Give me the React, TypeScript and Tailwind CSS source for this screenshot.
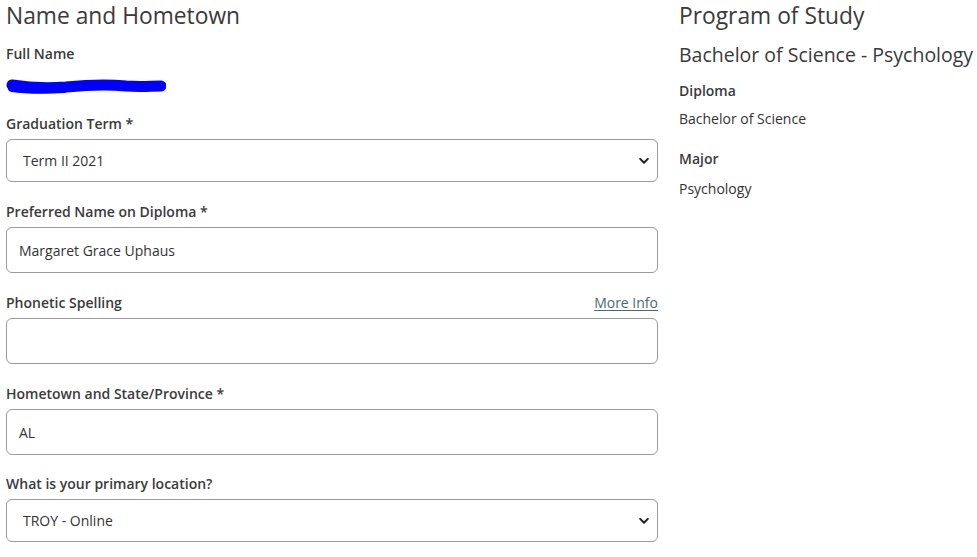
import React from "react";

const Chevron = () => (
  <svg width="10" height="7" viewBox="0 0 10 7" className="absolute right-[4px] top-1/2 -translate-y-1/2">
    <path d="M1.2 1.4 L5 5.2 L8.8 1.4" fill="none" stroke="#222" strokeWidth="2" strokeLinecap="round" strokeLinejoin="round" />
  </svg>
);

function Label({ children }: { children: React.ReactNode }) {
  return <div className="text-[14px] leading-[21px] font-semibold text-[#3a3a3a]">{children}</div>;
}

function SelectBox({ value }: { value: string }) {
  return (
    <div className="relative h-[43px] rounded-[6px] border border-[#9a9a9a] bg-white flex items-center pl-[16px]">
      <span className="text-[14px] text-[#333]">{value}</span>
      <div className="absolute right-[4px] top-0 bottom-0 w-[12px]">
        <Chevron />
      </div>
    </div>
  );
}

function TextBox({ value }: { value: string }) {
  return (
    <div className="h-[46px] rounded-[6px] border border-[#9a9a9a] bg-white flex items-center pl-[12px]">
      <span className="text-[14px] text-[#333]">{value}</span>
    </div>
  );
}

export default function App() {
  return (
    <div className="w-[977px] h-[557px] bg-white overflow-hidden flex" style={{ fontFamily: '"Open Sans", "Liberation Sans", sans-serif' }}>
      <div className="w-[652px] ml-[6px] shrink-0">
        <h2 className="text-[22.8px] leading-[30px] font-normal text-[#3a3a3a] mt-[1px]">Name and Hometown</h2>
        <div className="mt-[12px]">
          <Label>Full Name</Label>
        </div>
        <svg width="160" height="22" viewBox="0 0 160 22" className="block mt-[9px]">
          <path
            d="M6 12 C 25 15, 45 15, 60 14 C 80 12, 100 11, 120 13 C 135 14, 145 13, 155 13"
            fill="none"
            stroke="#0000ff"
            strokeWidth="11"
            strokeLinecap="round"
          />
          <path d="M6 15 C 20 17, 40 17, 58 16" fill="none" stroke="#0000ff" strokeWidth="8" strokeLinecap="round" />
        </svg>
        <div className="mt-[18px] mb-[5px]">
          <Label>Graduation Term *</Label>
        </div>
        <SelectBox value="Term II 2021" />
        <div className="mt-[19px] mb-[5px]">
          <Label>Preferred Name on Diploma *</Label>
        </div>
        <TextBox value="Margaret Grace Uphaus" />
        <div className="mt-[19px] mb-[5px] flex justify-between items-center">
          <Label>Phonetic Spelling</Label>
          <span className="text-[14px] text-[#4a6b6e] underline underline-offset-2">More Info</span>
        </div>
        <TextBox value="" />
        <div className="mt-[19px] mb-[5px]">
          <Label>Hometown and State/Province *</Label>
        </div>
        <TextBox value="AL" />
        <div className="mt-[18px] mb-[5px]">
          <Label>What is your primary location?</Label>
        </div>
        <SelectBox value="TROY - Online" />
      </div>
      <div className="ml-[21px] flex-1">
        <h2 className="text-[22.8px] leading-[30px] font-normal text-[#3a3a3a] mt-[1px]">Program of Study</h2>
        <div className="text-[19.5px] leading-[26px] text-[#3a3a3a] mt-[11px] whitespace-nowrap">Bachelor of Science - Psychology</div>
        <div className="mt-[12px]">
          <Label>Diploma</Label>
        </div>
        <div className="text-[14px] leading-[21px] text-[#333] mt-[7px]">Bachelor of Science</div>
        <div className="mt-[19px]">
          <Label>Major</Label>
        </div>
        <div className="text-[14px] leading-[21px] text-[#333] mt-[9px]">Psychology</div>
      </div>
    </div>
  );
}
